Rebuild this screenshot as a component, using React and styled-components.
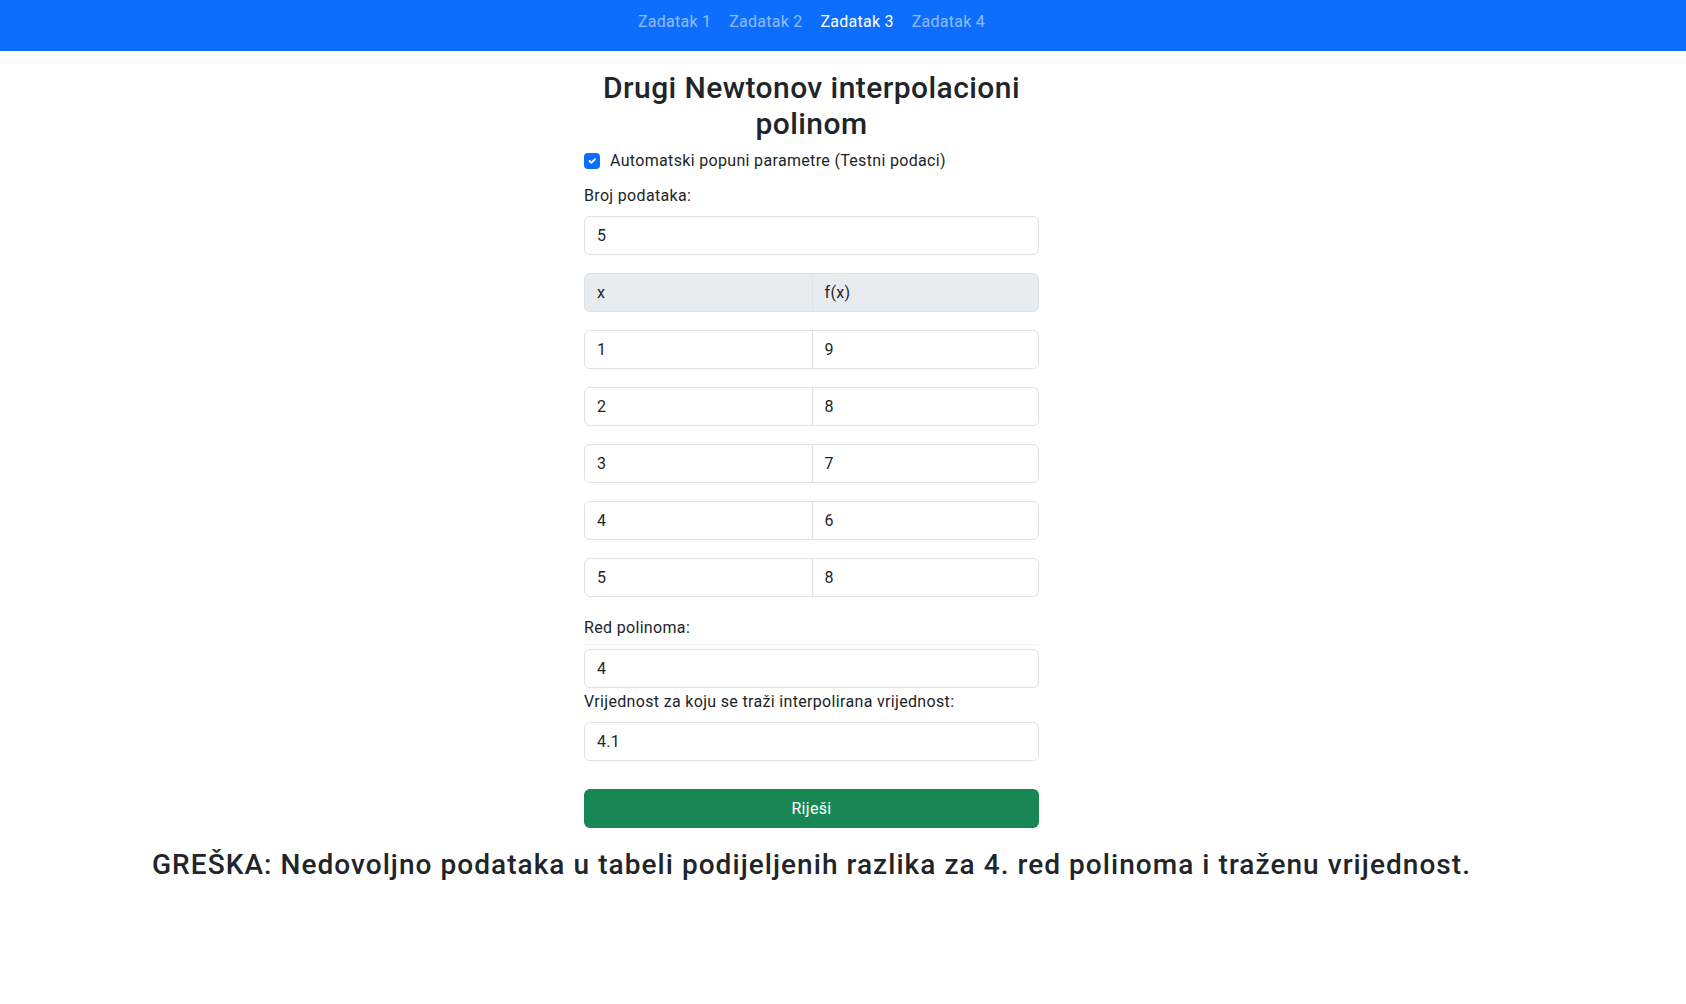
import React, { useState } from "react";
import styled, { createGlobalStyle } from "styled-components";

const GlobalStyle = createGlobalStyle`
  * { box-sizing: border-box; }
  html, body { margin: 0; padding: 0; background: #fff; }
  body {
    font-family: Roboto, "Noto Sans", "Liberation Sans", sans-serif;
    font-size: 16px;
    line-height: 1.5;
    letter-spacing: 0.33px;
    color: #212529;
  }
`;

const Navbar = styled.nav`
  background: #0d6efd;
  height: 51px;
  padding-right: 63px;
  display: flex;
  justify-content: center;
  align-items: flex-start;
`;

const NavList = styled.div`
  display: flex;
  gap: 2px;
  padding-top: 9px;
`;

const NavLink = styled.a`
  display: block;
  padding: 0 8px;
  line-height: 26px;
  font-size: 16px;
  letter-spacing: 0.25px;
  color: ${(p) => (p.$active ? "#ffffff" : "rgba(255,255,255,0.55)")};
  text-decoration: none;
  cursor: pointer;
`;

const Page = styled.main`
  padding-right: 63px;
  display: flex;
  flex-direction: column;
  align-items: center;
`;

const FormBox = styled.div`
  width: 455px;
  display: flex;
  flex-direction: column;
`;

const Title = styled.h2`
  margin: 19px 0 0;
  font-size: 30px;
  font-weight: 500;
  line-height: 36px;
  letter-spacing: 0.43px;
  text-align: center;
`;

const CheckRow = styled.label`
  display: flex;
  align-items: center;
  gap: 10px;
  margin-top: 7px;
  height: 24px;
  font-size: 16px;
`;

const CheckBox = styled.span`
  width: 16px;
  height: 16px;
  border-radius: 4px;
  background: #0d6efd;
  display: flex;
  align-items: center;
  justify-content: center;
`;

const Label = styled.div`
  margin-top: ${(p) => p.$mt || 0}px;
  line-height: 24px;
  font-size: 16px;
  padding-bottom: ${(p) => (p.$line ? 4 : 0)}px;
  border-bottom: ${(p) => (p.$line ? "1px solid #eef2f8" : "none")};
  margin-bottom: ${(p) => (p.$line ? 4 : 8)}px;
`;

const Input = styled.div`
  height: 39px;
  border: 1px solid #dee2e6;
  border-radius: 6px;
  padding: 0 12px;
  display: flex;
  align-items: center;
  font-size: 16px;
  background: #fff;
`;

const Group = styled.div`
  display: grid;
  grid-template-columns: 1fr 1fr;
  height: 39px;
  margin-top: 18px;
  border: 1px solid #dee2e6;
  border-radius: 6px;
  background: ${(p) => (p.$head ? "#e9ecef" : "#fff")};
  overflow: hidden;
`;

const Cell = styled.div`
  display: flex;
  align-items: center;
  padding: 0 12px;
  font-size: 16px;
  & + & { border-left: 1px solid #dee2e6; }
`;

const SolveButton = styled.button`
  margin-top: 28px;
  height: 39px;
  width: 100%;
  border: none;
  border-radius: 6px;
  background: #198754;
  color: #fff;
  font-family: inherit;
  font-size: 16px;
  letter-spacing: 0.33px;
`;

const ErrorText = styled.h3`
  margin: 20px 0 0;
  font-size: 28px;
  font-weight: 500;
  line-height: 34px;
  letter-spacing: 1.05px;
  text-align: center;
`;

const data = [
  ["1", "9"],
  ["2", "8"],
  ["3", "7"],
  ["4", "6"],
  ["5", "8"],
];

export default function App() {
  const [active] = useState(3);
  return (
    <>
      <GlobalStyle />
      <Navbar>
        <NavList>
          {[1, 2, 3, 4].map((n) => (
            <NavLink key={n} $active={n === active}>
              Zadatak {n}
            </NavLink>
          ))}
        </NavList>
      </Navbar>
      <Page>
        <FormBox>
          <Title>Drugi Newtonov interpolacioni polinom</Title>
          <CheckRow>
            <CheckBox>
              <svg width="12" height="12" viewBox="0 0 20 20">
                <path d="M6 10l3 3 6-6" fill="none" stroke="#fff" strokeWidth="3" strokeLinecap="round" strokeLinejoin="round" />
              </svg>
            </CheckBox>
            Automatski popuni parametre (Testni podaci)
          </CheckRow>
          <Label $mt={11}>Broj podataka:</Label>
          <Input>5</Input>
          <Group $head>
            <Cell>x</Cell>
            <Cell>f(x)</Cell>
          </Group>
          {data.map(([x, y], i) => (
            <Group key={i}>
              <Cell>{x}</Cell>
              <Cell>{y}</Cell>
            </Group>
          ))}
          <Label $mt={19} $line>Red polinoma:</Label>
          <Input>4</Input>
          <Label $mt={2}>Vrijednost za koju se traži interpolirana vrijednost:</Label>
          <Input>4.1</Input>
          <SolveButton>Riješi</SolveButton>
        </FormBox>
        <ErrorText>
          GREŠKA: Nedovoljno podataka u tabeli podijeljenih razlika za 4. red polinoma i traženu vrijednost.
        </ErrorText>
      </Page>
    </>
  );
}
